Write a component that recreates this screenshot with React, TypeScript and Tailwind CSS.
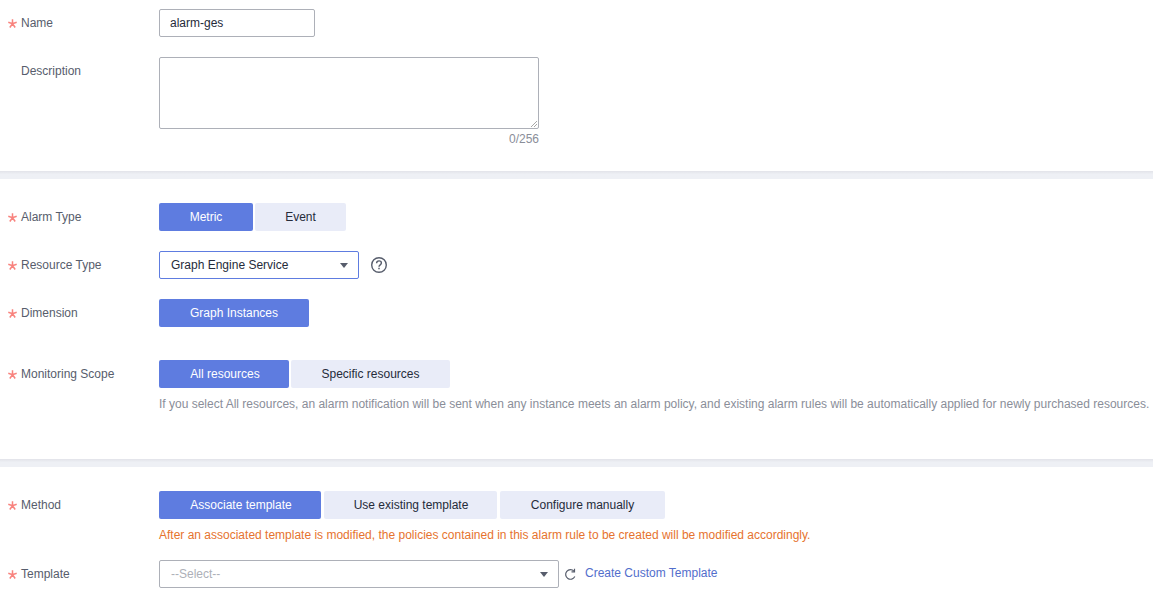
import type { ReactNode } from 'react';

function Star() {
  return (
    <svg width="9" height="9" viewBox="0 0 9 9" fill="none" stroke="#f8837e" strokeWidth="1.500">
      <path d="M4.500 0.300V4.700M0.300 3.300L4.500 4.700L8.700 3.300M4.500 4.700L1.800 8.500M4.500 4.700L7.200 8.500" />
    </svg>
  );
}

function Field({ label, required = true, className = '', children }: { label: string; required?: boolean; className?: string; children: ReactNode }) {
  return (
    <div className={`flex ${className}`}>
      <div className="w-[159px] shrink-0 h-7 flex items-center text-[#575d6c]">
        <span className="w-[21px] pl-[8px] shrink-0 flex items-center">{required ? <Star /> : null}</span>
        <span>{label}</span>
      </div>
      <div className="flex-1 min-w-0">{children}</div>
    </div>
  );
}

function Seg({ label, active, width, className = '' }: { label: string; active?: boolean; width: string; className?: string }) {
  return (
    <div
      className={`h-7 flex items-center justify-center rounded-[2px] ${width} ${className} ${active ? 'bg-[#5e7ce0] text-white' : 'bg-[#e9ecf8] text-[#252b3a]'}`}
    >
      {label}
    </div>
  );
}

function Caret() {
  return (
    <svg width="8" height="5" viewBox="0 0 8 5">
      <path d="M0 0h8L4 5z" fill="#575d6c" />
    </svg>
  );
}

function Divider() {
  return <div className="h-2 bg-linear-to-b from-[#e2e3e9] to-[#eef0f5] to-40%" />;
}

export default function App() {
  return (
    <div className="w-[1153px] h-[606px] overflow-hidden bg-white text-xs font-['Liberation_Sans',Arial,sans-serif]">
      <div className="h-[171px] pt-[9px]">
        <Field label="Name">
          <div className="w-[156px] h-7 border border-[#adb0b8] rounded-[2px] pl-[10px] flex items-center text-[#252b3a]">alarm-ges</div>
        </Field>
        <Field label="Description" required={false} className="mt-5">
          <div className="relative w-[380px] h-[72px] border border-[#adb0b8] rounded-[2px]">
            <svg className="absolute right-0 bottom-0" width="8" height="8" viewBox="0 0 8 8">
              <path d="M7 1L1 7M7 4L4 7" stroke="#a8a8a8" strokeWidth="1" />
            </svg>
          </div>
          <div className="w-[380px] text-right text-[#8a8e99] mt-[3px] leading-[14px]">0/256</div>
        </Field>
      </div>

      <Divider />

      <div className="h-[280px] pt-6">
        <Field label="Alarm Type">
          <div className="flex gap-[2px]">
            <Seg label="Metric" active width="w-[94px]" />
            <Seg label="Event" width="w-[91px]" />
          </div>
        </Field>
        <Field label="Resource Type" className="mt-5">
          <div className="flex items-center">
            <div className="w-[200px] h-7 border border-[#5e7ce0] rounded-[2px] pl-[11px] pr-[10px] flex items-center justify-between text-[#252b3a]">
              <span>Graph Engine Service</span>
              <Caret />
            </div>
            <svg className="ml-3" width="16" height="16" viewBox="0 0 16 16" fill="none" stroke="#575d6c">
              <circle cx="8" cy="8" r="7.300" strokeWidth="1.400" />
              <path d="M5.600 6.200c0-1.400 1.100-2.300 2.400-2.300s2.400.9 2.400 2.100c0 1.900-2.400 1.800-2.400 3.700" strokeWidth="1.400" />
              <path d="M8 10.800v1.500" strokeWidth="1.500" />
            </svg>
          </div>
        </Field>
        <Field label="Dimension" className="mt-5">
          <Seg label="Graph Instances" active width="w-[150px]" />
        </Field>
        <Field label="Monitoring Scope" className="mt-[33px]">
          <div className="flex gap-[2px]">
            <Seg label="All resources" active width="w-[130px]" className="pl-[2px]" />
            <Seg label="Specific resources" width="w-[159px]" />
          </div>
          <p className="mt-[9px] leading-[14px] text-[#8a8e99] whitespace-nowrap">
            If you select All resources, an alarm notification will be sent when any instance meets an alarm policy, and existing alarm rules will be automatically applied for newly purchased resources.
          </p>
        </Field>
      </div>

      <Divider />

      <div className="pt-6">
        <Field label="Method">
          <div className="flex gap-[3px]">
            <Seg label="Associate template" active width="w-[162px]" className="pl-[2px]" />
            <Seg label="Use existing template" width="w-[173px]" className="pl-[1px]" />
            <Seg label="Configure manually" width="w-[165px]" />
          </div>
          <p className="mt-[9px] leading-[14px] text-[#e6732e]">
            After an associated template is modified, the policies contained in this alarm rule to be created will be modified accordingly.
          </p>
        </Field>
        <Field label="Template" className="mt-[18px]">
          <div className="flex items-center">
            <div className="w-[400px] h-7 border border-[#adb0b8] rounded-[2px] pl-[11px] pr-[10px] flex items-center justify-between text-[#adb0b8]">
              <span>--Select--</span>
              <Caret />
            </div>
            <svg className="ml-[5px]" width="13" height="13" viewBox="0 0 13 13" fill="none" stroke="#575d6c" strokeWidth="1.200">
              <path d="M10.800 8.500A4.800 4.800 0 1 1 10 3.200" />
              <path d="M10.500 0.800v3h-3" />
            </svg>
            <a className="ml-[8px] text-[#526ecc] -mt-[3px]">Create Custom Template</a>
          </div>
        </Field>
      </div>
    </div>
  );
}
